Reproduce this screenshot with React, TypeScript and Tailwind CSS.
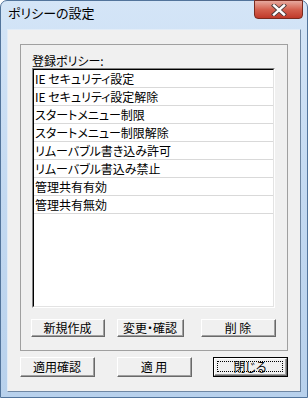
import React from "react";

const font = { fontFamily: '"Noto Sans CJK JP", "Noto Sans", sans-serif' };

function Btn({ label, w, ml, h, def }: { label: string; w: string; ml: string; h: string; def?: boolean }) {
  return (
    <div className={`${ml} ${w} ${h} ${def ? "border border-black" : ""}`}>
      <div className="h-full w-full border-t border-l border-white border-r border-b border-r-[#696969] border-b-[#696969] bg-[#f0f0f0]">
        <div className="h-full w-full border-r border-b border-[#a0a0a0] flex items-center justify-center relative">
          {def && <div className="absolute inset-[2px] border border-dotted border-black" />}
          <span className="text-[12px] leading-none text-black relative">{label}</span>
        </div>
      </div>
    </div>
  );
}

const items = [
  "IE セキュリティ設定",
  "IE セキュリティ設定解除",
  "スタートメニュー制限",
  "スタートメニュー制限解除",
  "リムーバブル書き込み許可",
  "リムーバブル書込み禁止",
  "管理共有有効",
  "管理共有無効",
];

export default function App() {
  return (
    <div className="w-[308px] h-[398px] overflow-hidden bg-white [font-feature-settings:'palt']" style={font}>
      <div className="w-[308px] h-[398px] rounded-t-[7px] border border-[#52749b] bg-gradient-to-b from-[#d4e5f7] via-[#c3d9f1] to-[#b8d1ec] flex flex-col">
        {/* title bar */}
        <div className="h-[28px] flex items-start shrink-0">
          <div className="pl-[7px] pt-[4px] text-[13px] leading-[16px] text-black">ポリシーの設定</div>
          <div className="ml-auto mr-[4px] w-[49px] h-[19px] -mt-px rounded-b-[4px] border border-[#7a2b1f] bg-gradient-to-b from-[#e6a99e] via-[#d4614f] to-[#c0392a] flex items-center justify-center">
            <svg width="16" height="12" viewBox="0 0 16 12">
              <path d="M3 1.5 L13 10.5 M13 1.5 L3 10.5" stroke="#4a3b3b" strokeWidth="4.2" strokeLinecap="square" />
              <path d="M3 1.5 L13 10.5 M13 1.5 L3 10.5" stroke="#ffffff" strokeWidth="2.4" strokeLinecap="square" />
            </svg>
          </div>
        </div>
        {/* client */}
        <div className="mx-[6px] w-[294px] h-[363px] border border-t-[#e2ecf7] border-l-[#e2ecf7] border-r-[#6f87a3] border-b-[#6f87a3] bg-[#f0f0f0] flex flex-col pt-[14px]">
          {/* group */}
          <div className="ml-[12px] w-[268px] h-[307px] border border-[#a0a0a0] flex flex-col">
            <div className="pl-[11px] pt-[8px] h-[23px] text-[12px] leading-[15px] text-black">登録ポリシー:</div>
            <div className="ml-[11px] w-[243px] h-[240px] border-t border-l border-[#828282] border-r border-b border-r-white border-b-white">
              <div className="h-full w-full border-t border-l border-black border-r border-b border-r-[#e3e3e3] border-b-[#e3e3e3] bg-white flex flex-col">
                {items.map((t) => (
                  <div key={t} className="h-[18px] shrink-0 border-b border-[#d9d9d9] pl-[1px] flex items-center text-[12px] leading-none text-black whitespace-nowrap">
                    {t}
                  </div>
                ))}
              </div>
            </div>
            <div className="flex mt-[11px]">
              <Btn label="新規作成" ml="ml-[10px]" w="w-[74px]" h="h-[18px]" />
              <Btn label="変更・確認" ml="ml-[12px]" w="w-[67px]" h="h-[18px]" />
              <Btn label="削 除" ml="ml-[17px]" w="w-[75px]" h="h-[18px]" />
            </div>
          </div>
          <div className="flex mt-[6px]">
            <Btn label="適用確認" ml="ml-[12px]" w="w-[75px]" h="h-[20px]" />
            <Btn label="適 用" ml="ml-[22px]" w="w-[75px]" h="h-[20px]" />
            <Btn label="閉じる" ml="ml-[21px]" w="w-[75px]" h="h-[20px]" def />
          </div>
        </div>
      </div>
    </div>
  );
}
